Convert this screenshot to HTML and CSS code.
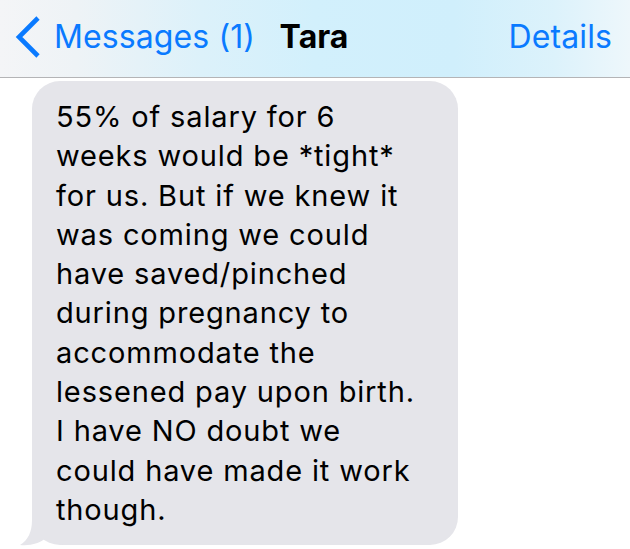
FILE: index.html
```html
<!DOCTYPE html>
<html>
<head>
<meta charset="utf-8">
<link rel="stylesheet" href="styles.css">
</head>
<body>
<header class="nav">
  <div class="nav-left">
    <svg class="chevron" width="30" height="44" viewBox="0 0 30 44"><path d="M24 3 L5 22 L24 41" fill="none" stroke="#0a7aff" stroke-width="4.6" stroke-linecap="butt" stroke-linejoin="miter"/></svg>
    <span class="nav-link">Messages (1)</span>
  </div>
  <div class="nav-title">Tara</div>
  <div class="nav-right"><span class="nav-link">Details</span></div>
</header>
<main class="thread">
  <div class="bubble">
    <p class="msg">55% of salary for 6<br>weeks would be *tight*<br>for us. But if we knew it<br>was coming we could<br>have saved/pinched<br>during pregnancy to<br>accommodate the<br>lessened pay upon birth.<br>I have NO doubt we<br>could have made it work<br>though.</p>
    <svg class="tail" width="50" height="34" viewBox="0 0 50 34"><path d="M14 0 L14 8 C14 20 10 28 2 33 C13 34 22 31 28 26 C34 31 42 33 50 33 L50 0 Z" fill="#e5e5ea"/></svg>
  </div>
</main>
</body>
</html>
```
FILE: styles.css
```css
html, body {
  margin: 0;
  padding: 0;
  background: #ffffff;
}
body {
  width: 630px;
  height: 549px;
  overflow: hidden;
  font-family: "Inter", "Liberation Sans", sans-serif;
}
.nav {
  height: 78px;
  box-sizing: border-box;
  border-bottom: 1px solid #b4b4b6;
  background: linear-gradient(90deg, #f4f5f7 0%, #eef3f6 12%, #dcf1fa 32%, #d2f0fc 50%, #d0effc 72%, #dcf2fb 88%, #eef7fb 100%);
  display: grid;
  grid-template-columns: 1fr auto 1fr;
  align-items: center;
  padding: 0 18px 4px 14px;
}
.nav-left {
  display: flex;
  align-items: center;
  gap: 10px;
}
.chevron {
  display: block;
}
.nav-link {
  color: #0a7aff;
  font-size: 32px;
  letter-spacing: 0.1px;
}
.nav-title {
  font-size: 32px;
  font-weight: 700;
  color: #000;
  margin-left: 2px;
}
.nav-right {
  display: flex;
  justify-content: flex-end;
}
.thread {
  padding: 3px 0 0 32px;
}
.bubble {
  position: relative;
  width: 426px;
  box-sizing: border-box;
  background: #e5e5ea;
  border-radius: 28px;
  padding: 16px 10px 16px 24px;
}
.msg {
  position: relative;
  z-index: 1;
  margin: 0;
  font-size: 29px;
  line-height: 39.3px;
  letter-spacing: 0.85px;
  color: #000;
  white-space: nowrap;
}
.tail {
  position: absolute;
  left: -14px;
  bottom: -1px;
  display: block;
}
```
